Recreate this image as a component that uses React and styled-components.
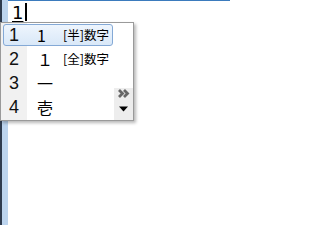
import React from 'react'
import styled, { createGlobalStyle, css } from 'styled-components'

const Global = createGlobalStyle`
	html, body {
		margin: 0;
		padding: 0;
		background: #ffffff;
	}
`

const Page = styled.div`
	position: relative;
	display: flex;
	width: 230px;
	height: 225px;
	overflow: hidden;
`
const EdgeLine = styled.div`
	width: 2px;
	background: #2e3b4e;
`
const Gutter = styled.div`
	width: 6px;
	background: #bcd4ee;
`
const Editor = styled.div`
	flex: 1;
	border-top: 1px solid #3b7bbd;
	padding: 2px 0 0 3px;
`
const Composition = styled.div`
	display: flex;
	align-items: flex-start;
	height: 19px;
	font-family: "DejaVu Sans", sans-serif;
	font-size: 18px;
	line-height: 19px;
	color: #000;
`
const Pending = styled.span`
	text-decoration: underline;
	text-underline-offset: 2px;
	text-decoration-thickness: 1px;
	padding: 0 1px;
`
const Caret = styled.span`
	width: 2px;
	height: 18px;
	margin-left: 1px;
	background: #000;
`

const Popup = styled.div`
	position: absolute;
	left: 0;
	top: 22px;
	width: 134px;
	height: 99px;
	box-sizing: border-box;
	display: flex;
	background: #fff;
	border: 1px solid #9a9a9a;
	box-shadow: 2px 2px 3px rgba(0, 0, 0, 0.28);
`
const List = styled.div`
	width: 113px;
	display: flex;
	flex-direction: column;
	background: linear-gradient(to right, #f1f1f1 26px, #ffffff 26px);
`
const Row = styled.div`
	position: relative;
	display: flex;
	align-items: center;
	height: 24px;
	${p => p.$selected && css`
		&::before {
			content: "";
			position: absolute;
			left: 2px;
			top: 1px;
			width: 110px;
			height: 22px;
			box-sizing: border-box;
			border: 1px solid #84a9d6;
			border-radius: 3px;
			background: linear-gradient(#eef5fd, #d9e8f8);
		}
	`}
`
const Num = styled.span`
	position: relative;
	width: 26px;
	text-align: center;
	font-family: "Liberation Sans", sans-serif;
	font-size: 18px;
	color: #111;
`
const Cand = styled.span`
	position: relative;
	width: 26px;
	padding-left: 10px;
	font-family: "Noto Sans CJK JP", sans-serif;
	font-size: 16px;
	line-height: 20px;
	color: #000;
`
const Note = styled.span`
	position: relative;
	font-family: "Noto Sans CJK JP", sans-serif;
	font-size: 12.5px;
	line-height: 20px;
	color: #000;
`
const Side = styled.div`
	width: 19px;
	display: flex;
	flex-direction: column;
	justify-content: flex-end;
`
const Pager = styled.div`
	height: 32px;
	display: flex;
	flex-direction: column;
	align-items: center;
	padding-top: 1px;
	box-sizing: border-box;
	background: #ededed;
`
const PagerGap = styled.div`
	flex: 1;
`

const candidates = [
	{ n: '1', text: '1', note: '[半]数字' },
	{ n: '2', text: '１', note: '[全]数字' },
	{ n: '3', text: '一' },
	{ n: '4', text: '壱' },
]

const Chevrons = () => (
	<svg width="12" height="9" viewBox="0 0 12 9">
		<path d="M1 1 L4.5 4.5 L1 8 M6 1 L9.5 4.5 L6 8" fill="none" stroke="#666" strokeWidth="2.8" />
	</svg>
)

const DownArrow = () => (
	<svg width="9" height="6" viewBox="0 0 9 6">
		<path d="M0 0.5 H9 L4.5 5.5 Z" fill="#000" />
	</svg>
)

const App = () => {
	return (
		<Page>
			<Global />
			<EdgeLine />
			<Gutter />
			<Editor>
				<Composition>
					<Pending>1</Pending>
					<Caret />
				</Composition>
			</Editor>
			<Popup>
				<List>
					{
						candidates.map((c, i) => (
							<Row key={c.n} $selected={i === 0}>
								<Num>{c.n}</Num>
								<Cand>{c.text}</Cand>
								{c.note && <Note>{c.note}</Note>}
							</Row>
						))
					}
				</List>
				<Side>
					<Pager>
						<Chevrons />
						<PagerGap />
						<DownArrow />
						<PagerGap />
					</Pager>
				</Side>
			</Popup>
		</Page>
	)
}

export default App
